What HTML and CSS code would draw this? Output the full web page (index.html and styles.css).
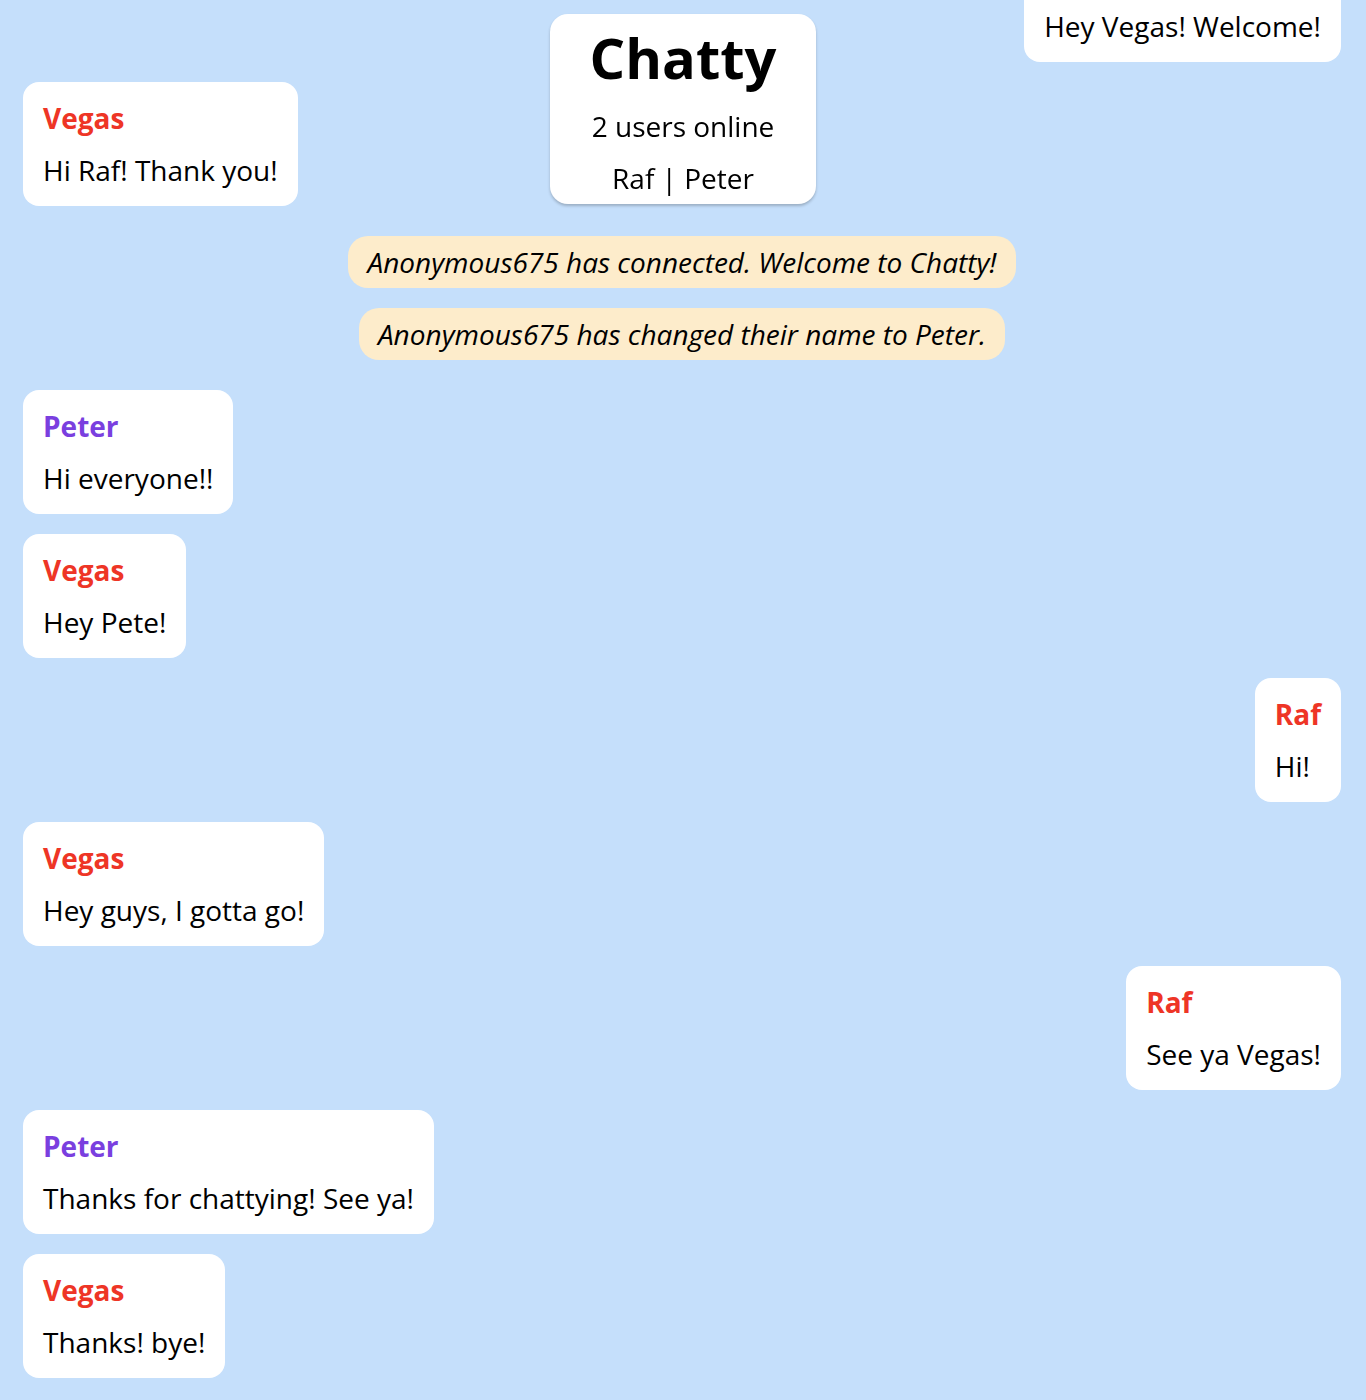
FILE: index.html
```html
<!DOCTYPE html>
<html>
<head>
<meta charset="utf-8">
<title>Chatty</title>
<link rel="stylesheet" href="styles.css">
</head>
<body>
<header class="navbar">
  <h1 class="brand">Chatty</h1>
  <div class="nav-line">2 users online</div>
  <div class="nav-line">Raf | Peter</div>
</header>
<main class="messages">
  <div class="message own">
    <div class="username red">Raf</div>
    <div class="content">Hey Vegas! Welcome!</div>
  </div>
  <div class="message">
    <div class="username red">Vegas</div>
    <div class="content">Hi Raf! Thank you!</div>
  </div>
  <div class="system-group">
    <div class="system">Anonymous675 has connected. Welcome to Chatty!</div>
    <div class="system">Anonymous675 has changed their name to Peter.</div>
  </div>
  <div class="message">
    <div class="username purple">Peter</div>
    <div class="content">Hi everyone!!</div>
  </div>
  <div class="message">
    <div class="username red">Vegas</div>
    <div class="content">Hey Pete!</div>
  </div>
  <div class="message own">
    <div class="username red">Raf</div>
    <div class="content">Hi!</div>
  </div>
  <div class="message">
    <div class="username red">Vegas</div>
    <div class="content">Hey guys, I gotta go!</div>
  </div>
  <div class="message own">
    <div class="username red">Raf</div>
    <div class="content">See ya Vegas!</div>
  </div>
  <div class="message">
    <div class="username purple">Peter</div>
    <div class="content">Thanks for chattying! See ya!</div>
  </div>
  <div class="message">
    <div class="username red">Vegas</div>
    <div class="content">Thanks! bye!</div>
  </div>
</main>
</body>
</html>
```
FILE: styles.css
```css
html, body {
  margin: 0;
  padding: 0;
}
body {
  background: #c5dffb;
  font-family: "Open Sans", "Noto Sans", sans-serif;
  font-size: 28px;
  color: #000;
}
.navbar {
  position: fixed;
  top: 14px;
  left: 50%;
  transform: translateX(-50%);
  width: 266px;
  box-sizing: border-box;
  background: #fff;
  border-radius: 18px;
  box-shadow: 0 2px 3px rgba(0, 0, 0, 0.22);
  text-align: center;
  z-index: 2;
}
.brand {
  margin: 0;
  font-size: 56px;
  font-weight: 700;
  line-height: 86px;
}
.nav-line {
  line-height: 52px;
}
.messages {
  display: flex;
  flex-direction: column;
  gap: 20px;
  margin-top: -62px;
  padding: 0 25px 20px 23px;
}
.message {
  align-self: flex-start;
  background: #fff;
  border-radius: 16px;
  padding: 10px 20px;
  line-height: 52px;
}
.message.own {
  align-self: flex-end;
}
.username {
  font-weight: 700;
}
.red { color: #ee3526; }
.purple { color: #7a3fdf; }
.system-group {
  display: flex;
  flex-direction: column;
  align-items: center;
  gap: 20px;
  padding: 10px 0;
}
.system {
  background: #fdeccb;
  border-radius: 20px;
  padding: 0 19px;
  line-height: 52px;
  font-style: italic;
}
```
